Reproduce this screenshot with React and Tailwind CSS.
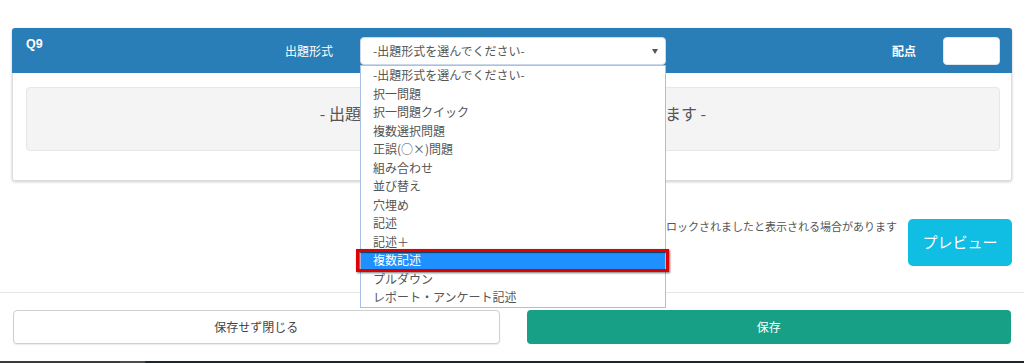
import { useState } from "react";

const options = [
  "-出題形式を選んでください-",
  "択一問題",
  "択一問題クイック",
  "複数選択問題",
  "正誤(○×)問題",
  "組み合わせ",
  "並び替え",
  "穴埋め",
  "記述",
  "記述＋",
  "複数記述",
  "プルダウン",
  "レポート・アンケート記述",
];

const QuestionPanel = ({ selected }) => {
  return (
    <div className="rounded-[3px] shadow-[0_1px_3px_rgba(0,0,0,0.2)]">
      {/* header */}
      <div className="h-[45px] bg-[#2a7eb8] rounded-t-[3px] flex pl-[14px] pr-[12px] text-white text-[12px]">
        <div className="w-[307px] flex justify-between">
          <div className="pt-[8px] leading-[17px] font-bold font-['Liberation_Sans',sans-serif] text-[12.5px]">Q9</div>
          <div className="leading-[17px] pt-[14px]">出題形式</div>
        </div>
        <div className="ml-[27px] mt-[9px] relative">
          <div className="w-[306px] h-[28px] bg-white rounded-[4px] border border-[#c9d8ea] flex items-center justify-between pl-[12px] pr-[7px] text-[#555]">
            <span className="leading-[16px]">-出題形式を選んでください-</span>
            <svg width="6" height="5" viewBox="0 0 6 5">
              <polygon points="0,0 6,0 3,5" fill="#555" />
            </svg>
          </div>
          {/* open option list */}
          <div className="absolute left-0 top-[28px] w-[306px] bg-white border border-[#a9bfe6] z-10">
            {options.map((o, i) => (
              <div
                key={o}
                className={
                  "h-[18.5px] leading-[18.5px] pl-[12px] text-[12px] " +
                  (i === selected ? "bg-[#1e90ff] text-white" : "text-[#555]")
                }
              >
                {o}
              </div>
            ))}
            <div className="absolute left-[-5px] top-[183px] w-[313px] h-[23px] border-[3px] border-[#e00000] shadow-[1px_1px_2px_rgba(0,0,0,0.55),inset_1px_1px_1px_rgba(0,0,0,0.6)]" />
          </div>
        </div>
        <div className="flex-1 flex justify-end pt-[14px] leading-[17px] font-bold">配点</div>
        <div className="ml-[27px] mt-[9px] w-[57px] h-[28px] bg-white rounded-[4px] border border-[#dfe6ee]" />
      </div>
      {/* body */}
      <div className="bg-white border-x border-b border-[#dcdcdc] rounded-b-[3px] pl-[13px] pr-[11px] pt-[14px] pb-[29px]">
        <div className="h-[64px] bg-[#f4f4f4] border border-[#e6e6e6] rounded-[4px] pt-[14px] text-center text-[16px] leading-[22px] text-[#555]">
          - 出題形式を選択すると設問の入力欄が表示されます -
        </div>
      </div>
    </div>
  );
};

const App = () => {
  const [selected] = useState(10);

  return (
    <div className="w-[1024px] h-[364px] bg-white overflow-hidden font-['Noto_Sans_CJK_JP','Noto_Sans',sans-serif]">
      <div className="px-[12px] pt-[28px] relative z-10">
        <QuestionPanel selected={selected} />
      </div>

      <div className="flex justify-end items-start pr-[12px] mt-[38px]">
        <div className="text-[11px] leading-[14px] text-[#555] mr-[11px]">
          ※長時間操作がない場合、保存時にセッションがロックされましたと表示される場合があります
        </div>
        <button className="w-[104px] h-[47px] rounded-[5px] bg-[#10bde3] text-white text-[15px]">
          プレビュー
        </button>
      </div>

      <div className="mt-[26px] h-px bg-[#e5e5e5]" />

      <div className="flex gap-[27px] px-[13px] pt-[17px]">
        <button className="flex-1 h-[34px] rounded-[4px] border border-[#cfcfcf] bg-white text-[12px] text-[#444] shadow-[0_1px_1px_rgba(0,0,0,0.08)]">
          保存せず閉じる
        </button>
        <button className="flex-1 h-[34px] rounded-[4px] bg-[#17a086] text-white text-[12px]">
          保存
        </button>
      </div>

      <div className="mt-[17px] h-[2px] flex">
        <div className="w-[120px] bg-[#3a3a3a]" />
        <div className="w-[25px] bg-[#4c4c4c]" />
        <div className="flex-1 bg-[#1d2731]" />
      </div>
    </div>
  );
};

export default App;
